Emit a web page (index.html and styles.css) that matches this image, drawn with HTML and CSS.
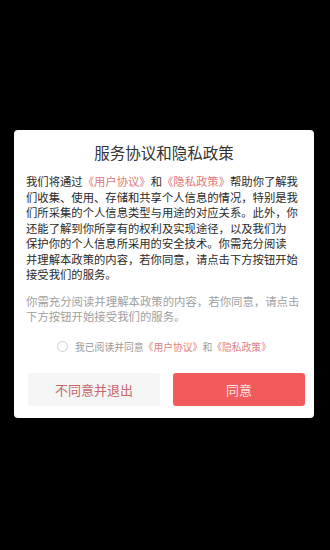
FILE: index.html
```html
<!DOCTYPE html>
<html lang="zh-CN">
<head>
<meta charset="utf-8">
<link rel="stylesheet" href="styles.css">
</head>
<body>
<div class="screen">
  <div class="dialog">
    <h1 class="title">服务协议和隐私政策</h1>
    <p class="body">我们将通过<span class="link">《用户协议》</span>和<span class="link">《隐私政策》</span>帮助你了解我<br>们收集、使用、存储和共享个人信息的情况，特别是我<br>们所采集的个人信息类型与用途的对应关系。此外，你<br>还能了解到你所享有的权利及实现途径，以及我们为<br>保护你的个人信息所采用的安全技术。你需充分阅读<br>并理解本政策的内容，若你同意，请点击下方按钮开始<br>接受我们的服务。</p>
    <p class="note">你需充分阅读并理解本政策的内容，若你同意，请点击<br>下方按钮开始接受我们的服务。</p>
    <div class="agree">
      <span class="radio"></span>
      <span class="agree-text">我已阅读并同意<span class="link">《用户协议》</span>和<span class="link">《隐私政策》</span></span>
    </div>
    <div class="actions">
      <button class="btn btn-cancel">不同意并退出</button>
      <button class="btn btn-ok">同意</button>
    </div>
  </div>
</div>
</body>
</html>
```
FILE: styles.css
```css
html, body {
  margin: 0;
  padding: 0;
  background: #000;
}
body {
  font-family: "Noto Sans CJK SC", "Noto Sans", sans-serif;
  width: 330px;
  height: 550px;
  text-spacing-trim: space-all;
}
.screen {
  height: 550px;
  padding-top: 130px;
  box-sizing: border-box;
}
.dialog {
  margin-left: 14px;
  width: 300px;
  height: 288px;
  box-sizing: border-box;
  background: #fff;
  border-radius: 4px;
  padding-top: 11px;
}
.title {
  margin: 0;
  font-size: 15.5px;
  line-height: 22px;
  font-weight: normal;
  color: #333;
  text-align: center;
}
.body {
  margin: 11px 0 0 12px;
  font-size: 11.33px;
  line-height: 15.5px;
  color: #2a2a2a;
  white-space: nowrap;
}
.link {
  color: #e1787b;
}
.note {
  margin: 11.5px 0 0 12px;
  font-size: 11.4px;
  line-height: 14.5px;
  color: #a0a0a0;
  white-space: nowrap;
}
.agree {
  margin-top: 16.5px;
  display: flex;
  align-items: center;
  justify-content: center;
  gap: 7px;
  height: 14px;
}
.radio {
  width: 9px;
  height: 9px;
  border: 1px solid #cfcfcf;
  border-radius: 50%;
}
.agree-text {
  font-size: 9.8px;
  line-height: 14px;
  color: #9a9a9a;
  white-space: nowrap;
}
.agree-text .link {
  color: #e08284;
}
.actions {
  margin: 19px 9px 0 14px;
  display: flex;
  gap: 13px;
}
.btn {
  flex: 1;
  height: 33px;
  border: none;
  border-radius: 3px;
  font-family: "Noto Sans CJK SC", "Noto Sans", sans-serif;
  font-size: 13px;
  padding: 0;
}
.btn-cancel {
  background: #f5f5f5;
  color: #c7676a;
}
.btn-ok {
  background: #f25b5c;
  color: #fde3e3;
}
```
